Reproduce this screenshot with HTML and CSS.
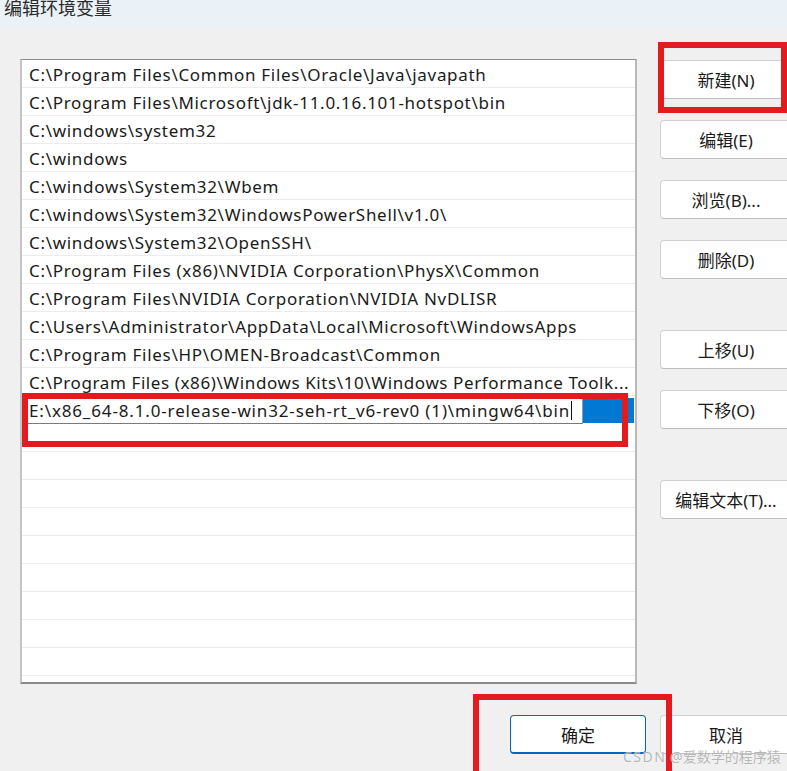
FILE: index.html
```html
<!DOCTYPE html>
<html lang="zh-CN">
<head>
    <meta charset="UTF-8">
    <meta name="viewport" content="width=device-width, initial-scale=1.0">
    <title>编辑环境变量</title>
    <link rel="stylesheet" href="styles.css">
</head>
<body>
    <div class="window">
        <div class="titlebar">
            <span class="title">编辑环境变量</span>
        </div>

        <div class="content">
            <div class="listbox">
                <div class="row">C:\Program Files\Common Files\Oracle\Java\javapath</div>
                <div class="row">C:\Program Files\Microsoft\jdk-11.0.16.101-hotspot\bin</div>
                <div class="row">C:\windows\system32</div>
                <div class="row">C:\windows</div>
                <div class="row">C:\windows\System32\Wbem</div>
                <div class="row">C:\windows\System32\WindowsPowerShell\v1.0\</div>
                <div class="row">C:\windows\System32\OpenSSH\</div>
                <div class="row">C:\Program Files (x86)\NVIDIA Corporation\PhysX\Common</div>
                <div class="row">C:\Program Files\NVIDIA Corporation\NVIDIA NvDLISR</div>
                <div class="row">C:\Users\Administrator\AppData\Local\Microsoft\WindowsApps</div>
                <div class="row">C:\Program Files\HP\OMEN-Broadcast\Common</div>
                <div class="row truncated">C:\Program Files (x86)\Windows Kits\10\Windows Performance Toolk...</div>
                <div class="row editing">
                    <div class="editbox"><span class="edit-text">E:\x86_64-8.1.0-release-win32-seh-rt_v6-rev0 (1)\mingw64\bin</span><span class="caret"></span></div>
                    <div class="selection"></div>
                </div>
                <div class="row"></div>
                <div class="row"></div>
                <div class="row"></div>
                <div class="row"></div>
                <div class="row"></div>
                <div class="row"></div>
                <div class="row"></div>
                <div class="row"></div>
                <div class="row"></div>
            </div>

            <div class="actions">
                <button class="btn">新建(N)</button>
                <button class="btn">编辑(E)</button>
                <button class="btn">浏览(B)...</button>
                <button class="btn">删除(D)</button>
                <button class="btn group-start">上移(U)</button>
                <button class="btn">下移(O)</button>
                <button class="btn group-start">编辑文本(T)...</button>
            </div>
        </div>

        <div class="footer">
            <button class="btn primary">确定</button>
            <button class="btn">取消</button>
        </div>

        <!-- 标注框 -->
        <div class="mark mark-new"></div>
        <div class="mark mark-edit"></div>
        <div class="mark mark-ok"></div>

        <div class="watermark"><span class="wm-site">CSDN</span> @爱数学的程序猿</div>
    </div>
</body>
</html>
```

FILE: styles.css
```css
html, body {
    margin: 0;
    padding: 0;
    overflow: hidden;
}
body {
    font-family: "Noto Sans", "Noto Sans CJK SC", sans-serif;
    background-color: #f0f0f0;
    color: #1a1a1a;
}
.window {
    position: relative;
    width: 792px;
    height: 771px;
    background-color: #f0f0f0;
}
.titlebar {
    height: 28px;
    background-color: #eaf2f7;
    overflow: hidden;
}
.title {
    display: block;
    padding-left: 4px;
    font-size: 18px;
    line-height: 16px;
    color: #2b2b2b;
}
.content {
    display: flex;
    align-items: flex-start;
}
.listbox {
    box-sizing: border-box;
    width: 617px;
    height: 625px;
    margin: 31px 0 0 20px;
    background: white;
    border-top: 1px solid #8c8c8c;
    border-left: 2px solid #c3c3c9;
    border-right: 2px solid #b9b9b9;
    border-bottom: 2px solid #8a8a8a;
    overflow: hidden;
}
.row {
    box-sizing: border-box;
    height: 28px;
    padding: 1px 2px 0 7px;
    border-bottom: 1px solid #ececec;
    font-size: 17px;
    letter-spacing: 0.7px;
    line-height: 27px;
    white-space: nowrap;
    overflow: hidden;
}
.row.truncated {
    letter-spacing: 0.6px;
    padding-right: 0;
}
.row.editing {
    display: flex;
    align-items: flex-start;
    padding: 2px 1px 0 6px;
    border-bottom: none;
}
.editbox {
    box-sizing: border-box;
    display: flex;
    align-items: center;
    width: 556px;
    height: 26px;
    padding-left: 1px;
    border-bottom: 1px solid #7a7a7a;
    border-right: 1px solid #9a9a9a;
    line-height: 24px;
    overflow: hidden;
}
.edit-text {
    letter-spacing: 0.85px;
}
.caret {
    flex: none;
    width: 1px;
    height: 19px;
    margin-left: 1px;
    background: #111;
}
.selection {
    width: 51px;
    height: 25px;
    background-color: #0078d4;
}
.actions {
    display: flex;
    flex-direction: column;
    gap: 21px;
    margin: 32px 0 0 23px;
}
.actions .group-start {
    margin-top: 30px;
}
.btn {
    box-sizing: border-box;
    width: 132px;
    height: 39px;
    padding: 0;
    background: white;
    border: 1px solid #d0d0d0;
    border-bottom-color: #bdbdbd;
    border-radius: 4px;
    font-family: "Noto Sans", "Noto Sans CJK SC", sans-serif;
    font-size: 17px;
    color: #1a1a1a;
}
.footer {
    display: flex;
    justify-content: flex-end;
    gap: 14px;
    margin-top: 31px;
}
.btn.primary {
    width: 136px;
    border: 1px solid #0067c0;
    border-bottom-width: 2px;
}
.mark {
    position: absolute;
    box-sizing: border-box;
    border: 6px solid #e31b1f;
}
.mark-new {
    left: 658px;
    top: 42px;
    width: 129px;
    height: 71px;
}
.mark-edit {
    left: 22px;
    top: 393px;
    width: 606px;
    height: 54px;
}
.mark-ok {
    left: 473px;
    top: 694px;
    width: 199px;
    height: 90px;
}
.watermark {
    position: absolute;
    left: 623px;
    top: 748px;
    font-size: 14px;
    line-height: 18px;
    color: rgba(150, 150, 150, 0.7);
    text-shadow: 0 0 1px white;
    white-space: nowrap;
}
.wm-site {
    letter-spacing: 1.5px;
}
```
